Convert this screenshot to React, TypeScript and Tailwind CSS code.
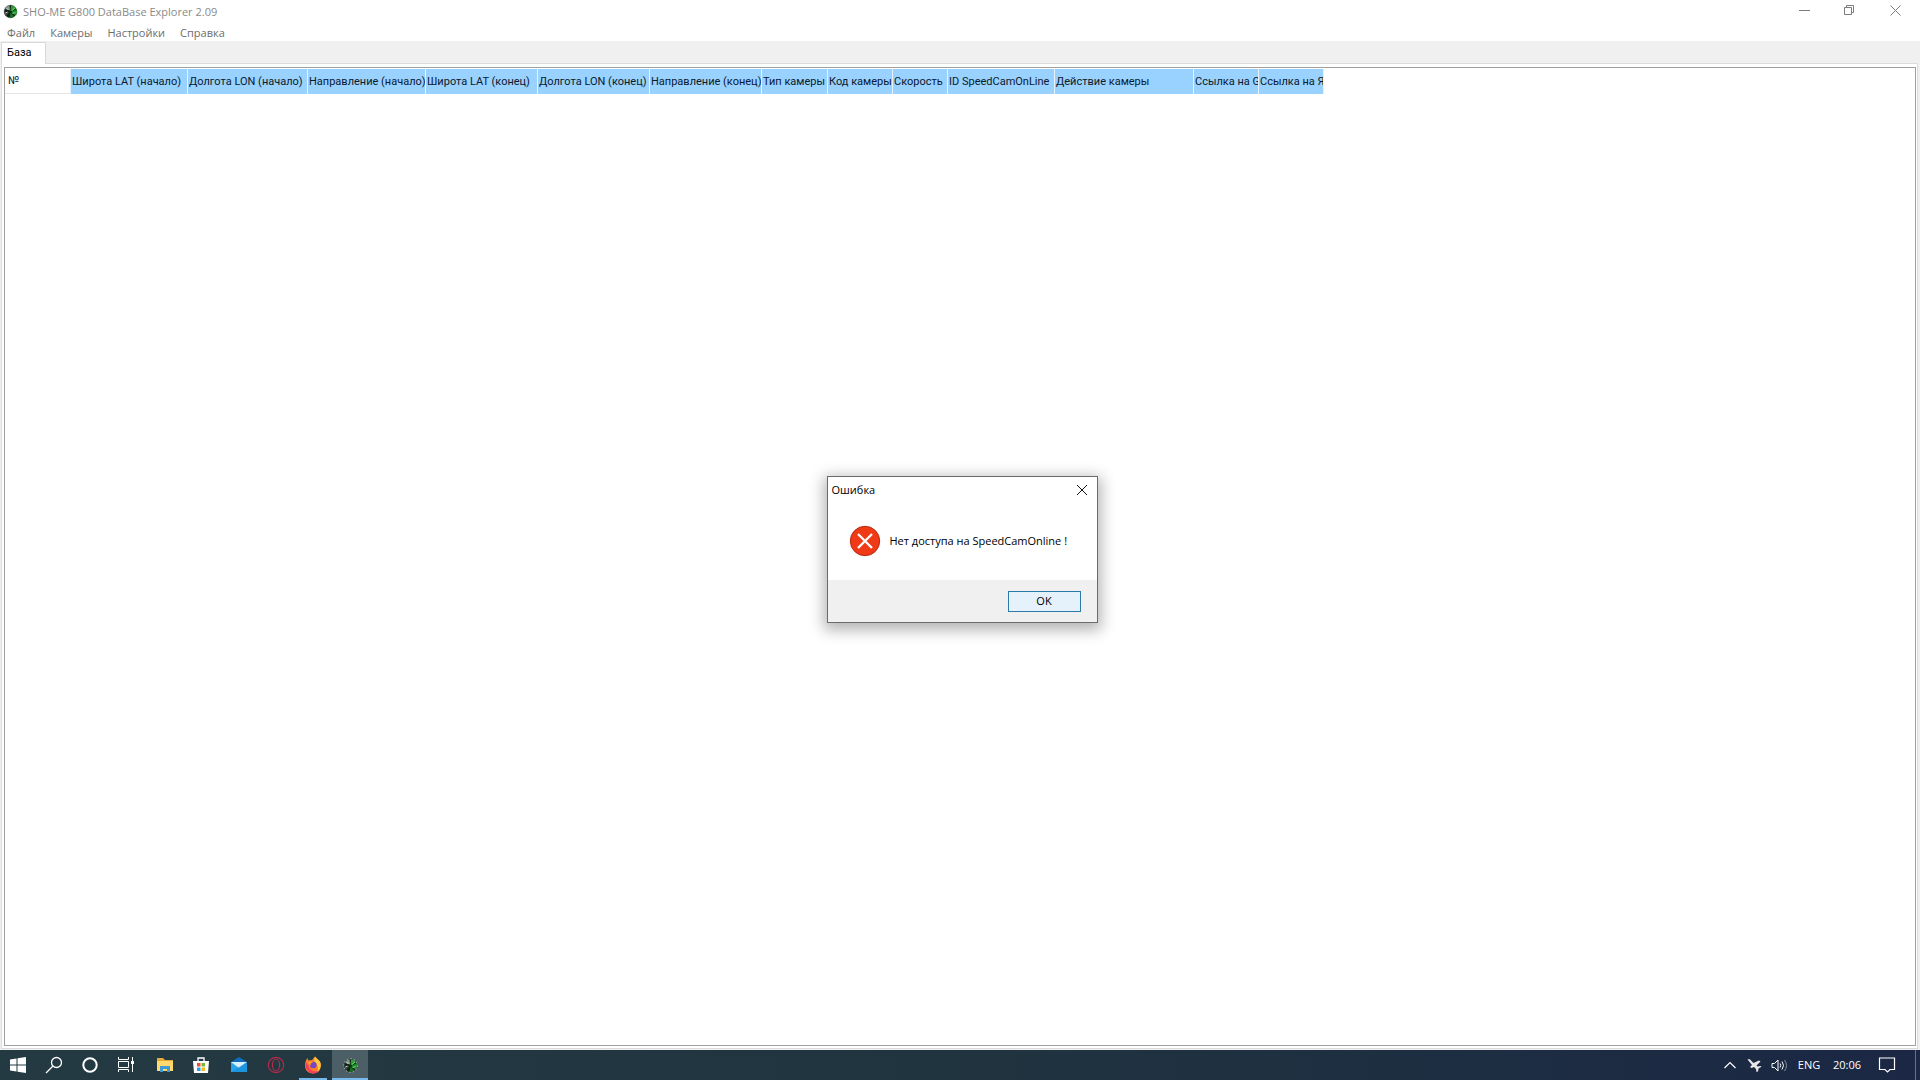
import React, { useState } from "react";

const columns = [
    { title: "№", width: "w-[66px]" },
    { title: "Широта LAT (начало)", width: "w-[117px]" },
    { title: "Долгота LON (начало)", width: "w-[120px]" },
    { title: "Направление (начало)", width: "w-[118px]" },
    { title: "Широта LAT (конец)", width: "w-[112px]" },
    { title: "Долгота LON (конец)", width: "w-[112px]" },
    { title: "Направление (конец)", width: "w-[112px]" },
    { title: "Тип камеры", width: "w-[66px]" },
    { title: "Код камеры", width: "w-[65px]" },
    { title: "Скорость", width: "w-[55px]" },
    { title: "ID SpeedCamOnLine", width: "w-[107px]" },
    { title: "Действие камеры", width: "w-[139px]" },
    { title: "Ссылка на G", width: "w-[65px]" },
    { title: "Ссылка на Я", width: "w-[65px]" },
];

const menu = ["Файл", "Камеры", "Настройки", "Справка"];

const AppIcon = () => (
    <svg width="15" height="15" viewBox="0 0 15 15">
        <circle cx="7.5" cy="7.5" r="6.5" fill="#0c1f10" />
        <path d="M7.5 7.5L8 1.200a6.300 6.300 0 0 1 5 3z" fill="#2f9a38" />
        <path d="M8 8L13.600 5a6.300 6.300 0 0 1-1 6.500z" fill="#1f8a2c" />
        <path d="M7.5 8.500l4 4a6 6 0 0 1-5 1z" fill="#17701f" />
        <path d="M6.500 8L3 12.500A6 6 0 0 1 1.200 7.500z" fill="#3c4640" />
        <path d="M7 6.500L2 5a6 6 0 0 1 4.500-3.700z" fill="#8b968f" />
        <path d="M9 6.500l3-2.500M9.500 9.500l3-1" stroke="#6be56f" strokeWidth="1" />
        <path d="M3.500 4.500l2 1M2.500 9l2-1" stroke="#c7d0ca" strokeWidth="1" />
        <circle cx="7.5" cy="7.5" r="6.800" fill="none" stroke="#b9c4bc" strokeWidth="0.800" strokeDasharray="1.500 2" />
    </svg>
);

const TitleBar = () => (
    <header className="flex h-[23px] items-start justify-between">
        <div className="flex items-center gap-1 pl-[3px] pt-[3px] text-[11px] leading-[17px] text-[#8a8a8a]">
            <AppIcon />
            <h1 className="pl-px">SHO-ME G800 DataBase Explorer 2.09</h1>
        </div>
        <div className="flex pr-px text-[#7c7c7c]">
            <button aria-label="Свернуть" className="flex h-5 w-[45px] items-center justify-center">
                <svg width="11" height="11" viewBox="0 0 11 11" fill="none" stroke="currentColor">
                    <path d="M0 5.500h11" />
                </svg>
            </button>
            <button aria-label="Восстановить" className="flex h-5 w-[45px] items-center justify-center">
                <svg width="11" height="11" viewBox="0 0 11 11" fill="none" stroke="currentColor">
                    <path d="M0.500 2.500h7v7h-7zM2.500 2.500v-2h7v7h-2" />
                </svg>
            </button>
            <button aria-label="Закрыть" className="flex h-5 w-[47px] items-center justify-center">
                <svg width="11" height="11" viewBox="0 0 11 11" fill="none" stroke="currentColor">
                    <path d="M0.500 0.500l10 10M10.500 0.500l-10 10" />
                </svg>
            </button>
        </div>
    </header>
);

const MenuBar = () => (
    <nav className="flex h-[18px] gap-[15px] pl-[7px] text-[11px] leading-[19px] text-[#6d6d6d]">
        {menu.map((item) => (
            <button key={item}>{item}</button>
        ))}
    </nav>
);

const CameraTable = () => (
    <div className="flex-1 overflow-hidden border border-[#a0a0a0] bg-white pt-px">
        <table className="w-[1319px] table-fixed border-separate border-spacing-0">
            <thead>
                <tr>
                    {columns.map((col, i) => (
                        <th
                            key={col.title}
                            className={`${col.width} ${i === 0 ? "border-b border-b-[#e5e5e5] bg-white pl-[3px]" : "bg-[#99d1ff] pl-px"} h-[25px] overflow-hidden border-r border-r-[#e5f1fb] text-left font-[Roboto,sans-serif] text-[11px] leading-4 font-normal whitespace-nowrap text-[#0b1a2c]`}
                        >
                            {col.title}
                        </th>
                    ))}
                </tr>
            </thead>
        </table>
    </div>
);

const ErrorDialog = ({ onClose }: { onClose: () => void }) => (
    <div className="absolute inset-0 flex items-center justify-center pt-[19px] pl-1">
        <section
            role="alertdialog"
            aria-label="Ошибка"
            className="w-[271px] border border-[#6b6b6b] bg-white text-[11px] text-black shadow-[0_4px_14px_3px_rgba(0,0,0,0.3)]"
        >
            <div className="flex h-[25px] items-center justify-between pr-[9px] pl-1">
                <h2 className="leading-4">Ошибка</h2>
                <button aria-label="Закрыть" onClick={onClose}>
                    <svg width="12" height="12" viewBox="0 0 12 12" fill="none" stroke="#111">
                        <path d="M1 1l10 10M11 1L1 11" />
                    </svg>
                </button>
            </div>
            <div className="flex h-[78px] items-center gap-[9px] pl-[21px]">
                <svg width="32" height="32" viewBox="0 0 32 32">
                    <circle cx="16" cy="16" r="14.700" fill="#f03a17" stroke="#b52a12" strokeWidth="1" />
                    <path d="M9 9l14 14M23 9L9 23" stroke="#fff" strokeWidth="2.300" />
                </svg>
                <p>Нет доступа на SpeedCamOnline !</p>
            </div>
            <div className="flex h-[42px] items-center justify-end bg-[#f0f0f0] pr-4">
                <button onClick={onClose} className="h-[21px] w-[73px] border border-[#2a7ba8] bg-[#e5f1fb] leading-4">
                    OK
                </button>
            </div>
        </section>
    </div>
);

const WindowsLogo = () => (
    <svg width="18" height="18" viewBox="0 0 18 18" fill="#fff">
        <path d="M1 3.500l6.500-1v6H1zM8.500 2.300L17 1v7.500H8.500zM1 9.500h6.500v6L1 14.500zM8.500 9.500H17V17l-8.500-1.300z" />
    </svg>
);

const SearchIcon = () => (
    <svg width="18" height="18" viewBox="0 0 18 18" fill="none" stroke="#fff" strokeWidth="1.300">
        <circle cx="11.500" cy="6.500" r="5" />
        <path d="M8 10L1 17" />
    </svg>
);

const CortanaIcon = () => (
    <svg width="18" height="18" viewBox="0 0 18 18" fill="none" stroke="#fff" strokeWidth="2">
        <circle cx="9" cy="9" r="6.700" />
    </svg>
);

const TaskViewIcon = () => (
    <svg width="18" height="18" viewBox="0 0 18 18" fill="none" stroke="#fff">
        <path d="M1.500 1v2.500h10V1M1.500 5.500h10v6h-10zM1.500 16v-2.500h10V16M15.500 1v15" />
        <path d="M14 5h3v3h-3z" fill="#fff" stroke="none" />
    </svg>
);

const ExplorerIcon = () => (
    <svg width="18" height="18" viewBox="0 0 18 18">
        <path d="M1 2h6l2 2h8v11H1z" fill="#e5a93a" />
        <path d="M1 5h16v10H1z" fill="#ffd96b" />
        <path d="M4 16v-6h10v6h-3v-3H7v3z" fill="#3f9bd6" />
    </svg>
);

const StoreIcon = () => (
    <svg width="18" height="18" viewBox="0 0 18 18">
        <path d="M6 5V2h6v3" fill="none" stroke="#fff" strokeWidth="1.300" />
        <path d="M1 5h16l-1 12H2z" fill="#fff" />
        <path d="M5 7h3.500v3.500H5z" fill="#e8512c" />
        <path d="M9.500 7H13v3.500H9.500z" fill="#7db72f" />
        <path d="M5 11.500h3.500V15H5z" fill="#2a9fdc" />
        <path d="M9.500 11.500H13V15H9.500z" fill="#f5b81f" />
    </svg>
);

const MailIcon = () => (
    <svg width="18" height="18" viewBox="0 0 18 18">
        <path d="M1 6l8-5 8 5v2H1z" fill="#0f6cbd" />
        <path d="M1 6h16v10H1z" fill="#2aa5ec" />
        <path d="M1 6h16l-8 6z" fill="#d9f1ff" />
        <path d="M1 16l16-10v10z" fill="#1688d6" fillOpacity="0.600" />
    </svg>
);

const OperaIcon = () => (
    <svg width="18" height="18" viewBox="0 0 18 18" fill="none" stroke="#b02c4b" strokeWidth="1.200">
        <circle cx="9" cy="9" r="7.700" />
        <ellipse cx="9" cy="9" rx="3.600" ry="6" />
    </svg>
);

const FirefoxIcon = () => (
    <svg width="18" height="18" viewBox="0 0 18 18">
        <path d="M1 9c0-3 1-5 2.500-7l1 2.500L8 4l3-3.500c1 2 4 3 5.500 6.500 1.500 5-2 10.500-7.500 10.500S1 13.500 1 9z" fill="#ff7b2b" />
        <path d="M11 0.500c1 2 4.500 3 5.500 6.500 1 4-1 8-4 9.500 2-3 2-7-1-9.500-2-2-1.500-4-0.500-6.500z" fill="#ffc83a" />
        <path d="M1.500 6C1 12 4 17 9 17.500c3 0 5-1 6.500-3-4 2-10 1-11-5z" fill="#f0405e" />
        <circle cx="9.300" cy="9" r="3.300" fill="#7547c4" />
        <path d="M4 6c2-1.500 4-.5 5 .5-2 0-2.500 1-2 2.500-1.500 0-3-1-3-3z" fill="#ff9a30" />
    </svg>
);

const taskbarItems = [
    { name: "Пуск", icon: <WindowsLogo />, width: "w-9" },
    { name: "Поиск", icon: <SearchIcon />, width: "w-9" },
    { name: "Кортана", icon: <CortanaIcon />, width: "w-9" },
    { name: "Представление задач", icon: <TaskViewIcon />, width: "w-9" },
    { name: "Проводник", icon: <ExplorerIcon />, width: "w-[41px]" },
    { name: "Store", icon: <StoreIcon />, width: "w-8" },
    { name: "Почта", icon: <MailIcon />, width: "w-11" },
    { name: "Opera", icon: <OperaIcon />, width: "w-[30px]" },
];

const Taskbar = () => (
    <footer className="flex h-[30px] shrink-0 justify-between bg-linear-to-r from-[#243a42] via-[#20343f] to-[#1b2744] text-[11px] text-white">
        <div className="flex">
            {taskbarItems.map((item) => (
                <button key={item.name} aria-label={item.name} className={`${item.width} flex items-center justify-center`}>
                    {item.icon}
                </button>
            ))}
            <button aria-label="Firefox" className="ml-2 flex w-[28px] items-center justify-center border-b-2 border-[#76b9ed] pt-[2px]">
                <FirefoxIcon />
            </button>
            <button aria-label="SHO-ME" className="ml-[5px] flex w-9 items-center justify-center border-b-2 border-[#76b9ed] bg-[#4c5f66] pt-[2px]">
                <AppIcon />
            </button>
        </div>
        <div className="flex items-center">
            <button aria-label="Скрытые значки" className="w-6 pl-1">
                <svg width="14" height="14" viewBox="0 0 14 14" fill="none" stroke="#fff" strokeWidth="1.200">
                    <path d="M1.500 10L7 4.500 12.500 10" />
                </svg>
            </button>
            <button aria-label="Режим в самолете" className="w-6 pl-1">
                <svg width="15" height="15" viewBox="0 0 15 15" fill="#e8e8e8">
                    <path d="M0.500 1.500l2-.5 4 4 5.500-2.500 1.500 1-4 4 1 1 3-.5 1 .8-3 1.700-.5 3-1.500.5-.5-3-2-2-2.500 1L3 9l2-2z" />
                </svg>
            </button>
            <button aria-label="Громкость" className="w-6 pl-1">
                <svg width="17" height="15" viewBox="0 0 17 15" fill="none" stroke="#fff">
                    <path d="M1 5.500h2.500L7 2v11L3.500 9.500H1zM9 5.500q1.500 2 0 4M11 3.500q3 4 0 8" />
                    <path d="M13.500 2q4 5.500 0 11" stroke="#8790a3" />
                </svg>
            </button>
            <button className="w-9">ENG</button>
            <time className="w-10 text-center">20:06</time>
            <button aria-label="Уведомления" className="flex w-10 justify-center">
                <svg width="18" height="18" viewBox="0 0 18 18" fill="none" stroke="#fff" strokeWidth="1.200">
                    <path d="M1.500 2h15v11.500H12L9.500 16 7 13.500H1.500z" />
                </svg>
            </button>
            <div className="ml-2 h-full w-[5px] border-l border-[#65708a]" />
        </div>
    </footer>
);

const App = () => {
    const [dialogOpen, setDialogOpen] = useState(true);

    return (
        <div className="relative flex h-screen flex-col overflow-hidden bg-white font-['Open_Sans',sans-serif]">
            <TitleBar />
            <MenuBar />
            <main className="flex flex-1 flex-col bg-[#f0f0f0] pt-px">
                <div role="tablist" className="flex h-[21px] px-px">
                    <button role="tab" aria-selected="true" className="z-10 -mb-px w-[45px] border border-b-0 border-[#d9d9d9] bg-white pb-px pl-[5px] text-left font-[Roboto,sans-serif] text-[11px] leading-4 text-black">
                        База
                    </button>
                </div>
                <div className="mr-[2px] ml-px flex flex-1 flex-col border border-[#dcdcdc] bg-white pt-[3px] pr-px pb-[2px] pl-[2px]">
                    <CameraTable />
                </div>
                <div className="h-px" />
            </main>
            <Taskbar />
            {dialogOpen && <ErrorDialog onClose={() => setDialogOpen(false)} />}
        </div>
    );
};

export default App;
